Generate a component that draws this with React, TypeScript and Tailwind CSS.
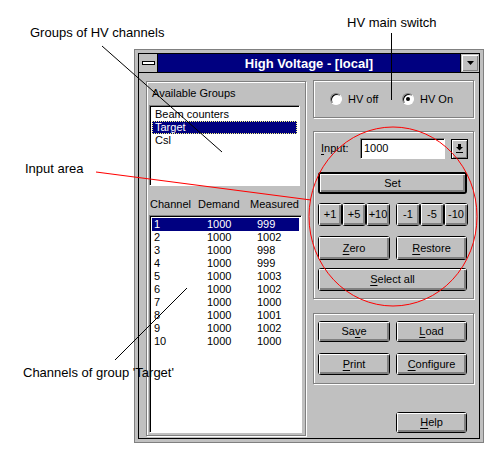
import React from 'react'

const font = "font-['Liberation_Sans',Arial,sans-serif]"

function U({ children }: { children: React.ReactNode }) {
    return <span className="underline underline-offset-[2px] decoration-1">{children}</span>
}

interface WinButtonProps {
    children?: React.ReactNode
    className?: string
    isDefault?: boolean
}

// Windows 3.1 push button: black rounded frame, white top-left, grey bottom-right bevel
const WinButton: React.FC<WinButtonProps> = ({ children, className = '', isDefault = false }) => {
    return (
        <button
            type="button"
            className={`flex shrink-0 bg-[#c0c0c0] border-black rounded-[3px] ${isDefault ? 'border-2' : 'border'} ${className}`}
        >
            <span className="flex-1 flex items-center justify-center shadow-[inset_1px_1px_0_#fff,inset_-2px_-2px_0_#808080] text-[11px] leading-none text-black">
                {children}
            </span>
        </button>
    )
}

const GroupBox: React.FC<{ className?: string; children?: React.ReactNode }> = ({ className = '', children }) => (
    <div className={`border border-[#808080] shadow-[1px_1px_0_#fff,inset_1px_1px_0_#fff] ${className}`}>
        {children}
    </div>
)

const Radio: React.FC<{ checked?: boolean; label: string; className?: string }> = ({ checked, label, className = '' }) => (
    <div className={`flex items-center gap-[6px] ${className}`}>
        <span className="w-[12px] h-[12px] rounded-full bg-white border border-[#808080] border-b-white border-r-white shadow-[inset_1px_1px_0_#000] flex items-center justify-center">
            {checked && <span className="w-[4px] h-[4px] rounded-full bg-black" />}
        </span>
        <span className="text-[11px] leading-none">{label}</span>
    </div>
)

const groups = ['Beam counters', 'Target', 'Csl']

const channels = [
    { ch: 1, demand: 1000, measured: 999 },
    { ch: 2, demand: 1000, measured: 1002 },
    { ch: 3, demand: 1000, measured: 998 },
    { ch: 4, demand: 1000, measured: 999 },
    { ch: 5, demand: 1000, measured: 1003 },
    { ch: 6, demand: 1000, measured: 1002 },
    { ch: 7, demand: 1000, measured: 1000 },
    { ch: 8, demand: 1000, measured: 1001 },
    { ch: 9, demand: 1000, measured: 1002 },
    { ch: 10, demand: 1000, measured: 1000 },
]

const sunken = "bg-white border border-[#808080] border-b-white border-r-white shadow-[inset_1px_1px_0_#000]"

function TitleBar() {
    return (
        <div className="h-[19px] flex border-b border-black">
            {/* system menu box */}
            <div className="w-[19px] border-r border-black flex items-center justify-center">
                <span className="w-[13px] h-[4px] bg-white border border-black" />
            </div>
            <div className="flex-1 bg-[#000080] flex items-center justify-center text-white font-bold text-[13px] leading-none">
                High Voltage - [local]
            </div>
            <div className="w-[19px] border-l border-black flex p-px">
                <div className="flex-1 flex items-center justify-center shadow-[inset_1px_1px_0_#fff,inset_-1px_-1px_0_#808080]">
                    <svg width="7" height="4" viewBox="0 0 7 4"><path d="M0 0h7L3.5 4z" fill="#000" /></svg>
                </div>
            </div>
        </div>
    )
}

function LeftPanel() {
    return (
        <GroupBox className="w-[160px] h-[355px] pl-[2px] flex flex-col">
            <div className="h-[23px] flex items-center pl-[3px] text-[11px] leading-none">Available Groups</div>
            <div className={`w-[151px] h-[81px] p-[2px] ${sunken}`}>
                {groups.map((g) => (
                    <div
                        key={g}
                        className={`h-[13px] pl-[3px] text-[11px] leading-[13px] ${g === 'Target' ? 'bg-[#000080] text-white outline-1 outline-dotted outline-[#ffff80] -outline-offset-1' : ''}`}
                    >
                        {g}
                    </div>
                ))}
            </div>
            <div className="h-[29px] pt-[12px] pl-[1px] flex text-[11px] leading-[13px]">
                <span className="w-[48px]">Channel</span>
                <span className="w-[52px]">Demand</span>
                <span>Measured</span>
            </div>
            <div className={`w-[153px] h-[218px] p-[2px] ${sunken}`}>
                {channels.map((c) => (
                    <div
                        key={c.ch}
                        className={`h-[13px] pl-[2px] flex text-[11px] leading-[13px] ${c.ch === 1 ? 'bg-[#000080] text-white' : ''}`}
                    >
                        <span className="w-[53px]">{c.ch}</span>
                        <span className="w-[50px]">{c.demand}</span>
                        <span>{c.measured}</span>
                    </div>
                ))}
            </div>
        </GroupBox>
    )
}

function RightPanel() {
    return (
        <div className="w-[161px] -mt-px flex flex-col">
            {/* HV main switch */}
            <GroupBox className="h-[38px] flex items-center pl-[16px]">
                <Radio label="HV off" className="w-[72px]" />
                <Radio label="HV On" checked />
            </GroupBox>

            {/* Input area */}
            <GroupBox className="mt-[13px] h-[168px] pl-[4px] pt-[6px] flex flex-col">
                <div className="flex items-center h-[21px]">
                    <span className="w-[42px] pl-[3px] text-[11px] leading-none"><U>I</U>nput:</span>
                    <div className={`w-[85px] h-[21px] flex items-center pl-[3px] text-[11px] ${sunken}`}>1000</div>
                    <button type="button" className="ml-[6px] w-[17px] h-[20px] border border-black flex bg-[#c0c0c0]">
                        <span className="flex-1 flex items-center justify-center shadow-[inset_1px_1px_0_#fff,inset_-1px_-1px_0_#808080]">
                            <svg width="7" height="9" viewBox="0 0 7 9">
                                <rect x="2" y="0" width="3" height="3" fill="#000" />
                                <path d="M0 3h7L3.5 6.5z" fill="#000" />
                                <rect x="0" y="8" width="7" height="1" fill="#000" />
                            </svg>
                        </span>
                    </button>
                </div>
                <WinButton isDefault className="mt-[13px] w-[149px] h-[22px]">Set</WinButton>
                <div className="mt-[9px] flex gap-[6px]">
                    <div className="flex">
                        <WinButton className="w-[24px] h-[23px]">+1</WinButton>
                        <WinButton className="w-[24px] h-[23px]">+5</WinButton>
                        <WinButton className="w-[24px] h-[23px]">+10</WinButton>
                    </div>
                    <div className="flex">
                        <WinButton className="w-[24px] h-[23px]">-1</WinButton>
                        <WinButton className="w-[24px] h-[23px]">-5</WinButton>
                        <WinButton className="w-[24px] h-[23px]">-10</WinButton>
                    </div>
                </div>
                <div className="mt-[10px] flex gap-[6px]">
                    <WinButton className="w-[72px] h-[24px]"><U>Z</U>ero</WinButton>
                    <WinButton className="w-[71px] h-[24px]"><U>R</U>estore</WinButton>
                </div>
                <WinButton className="mt-[8px] w-[149px] h-[23px]"><U>S</U>elect all</WinButton>
            </GroupBox>

            {/* Save / Load */}
            <GroupBox className="mt-[14px] h-[71px] pl-[4px] pt-[7px] flex flex-col">
                <div className="flex gap-[6px]">
                    <WinButton className="w-[72px] h-[21px]">Sa<U>v</U>e</WinButton>
                    <WinButton className="w-[71px] h-[21px]"><U>L</U>oad</WinButton>
                </div>
                <div className="mt-[11px] flex gap-[6px]">
                    <WinButton className="w-[72px] h-[22px]"><U>P</U>rint</WinButton>
                    <WinButton className="w-[71px] h-[22px]"><U>C</U>onfigure</WinButton>
                </div>
            </GroupBox>

            <WinButton className="mt-[28px] ml-[83px] w-[71px] h-[21px]"><U>H</U>elp</WinButton>
        </div>
    )
}

export default function App() {
    return (
        <div className={`relative w-[500px] h-[450px] bg-white overflow-hidden text-black ${font}`}>
            {/* dialog window */}
            <div className="absolute left-[134px] top-[49px] w-[350px] h-[394px] border border-[#808080] bg-[#c0c0c0] p-[3px]">
                <div className="h-full flex flex-col border border-black">
                    <TitleBar />
                    <div className="flex-1 flex pl-[7px] pt-[8px] gap-[7px]">
                        <LeftPanel />
                        <RightPanel />
                    </div>
                </div>
            </div>

            {/* annotations */}
            <svg className="absolute inset-0 pointer-events-none" width="500" height="450" viewBox="0 0 500 450">
                <line x1="102" y1="46" x2="222" y2="152" stroke="#000" strokeWidth="1" />
                <line x1="391.5" y1="33" x2="391.5" y2="100" stroke="#000" strokeWidth="1" />
                <line x1="96" y1="172" x2="311" y2="200" stroke="#f00" strokeWidth="1.2" />
                <ellipse cx="393" cy="216.5" rx="84" ry="89.5" fill="none" stroke="#f00" strokeWidth="1" />
                <line x1="115" y1="360" x2="187" y2="288" stroke="#000" strokeWidth="1" />
            </svg>
            <div className="absolute left-[30px] top-[25px] text-[13px] leading-[15px]">Groups of HV channels</div>
            <div className="absolute left-[347px] top-[15px] text-[13px] leading-[15px]">HV main switch</div>
            <div className="absolute left-[25px] top-[161px] text-[13px] leading-[15px]">Input area</div>
            <div className="absolute left-[23px] top-[365px] text-[13px] leading-[15px]">Channels of group 'Target'</div>
        </div>
    )
}
